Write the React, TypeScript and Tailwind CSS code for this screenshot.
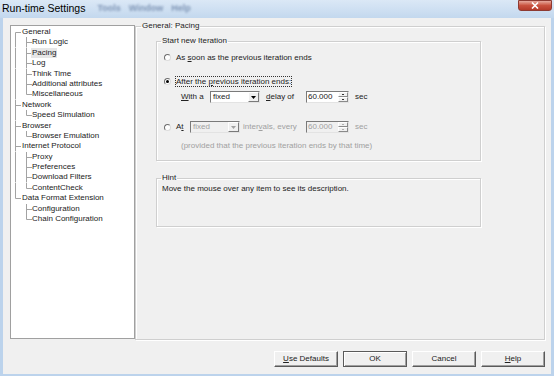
import React from "react";

type TreeRow = {
  label: string;
  level: 0 | 1;
  first?: boolean;
  last?: boolean;
  inLastGroup?: boolean;
  selected?: boolean;
};

const rows: TreeRow[] = [
  { label: "General", level: 0, first: true },
  { label: "Run Logic", level: 1 },
  { label: "Pacing", level: 1, selected: true },
  { label: "Log", level: 1 },
  { label: "Think Time", level: 1 },
  { label: "Additional attributes", level: 1 },
  { label: "Miscellaneous", level: 1, last: true },
  { label: "Network", level: 0 },
  { label: "Speed Simulation", level: 1, last: true },
  { label: "Browser", level: 0 },
  { label: "Browser Emulation", level: 1, last: true },
  { label: "Internet Protocol", level: 0 },
  { label: "Proxy", level: 1 },
  { label: "Preferences", level: 1 },
  { label: "Download Filters", level: 1 },
  { label: "ContentCheck", level: 1, last: true },
  { label: "Data Format Extension", level: 0, last: true },
  { label: "Configuration", level: 1, inLastGroup: true },
  { label: "Chain Configuration", level: 1, inLastGroup: true, last: true },
];

const H = 10.4;
const M = 5.5;
const LINE = "#a3a3a3";

function Connector({ row }: { row: TreeRow }) {
  if (row.level === 0) {
    const y1 = row.first ? M : 0;
    const y2 = row.last ? M : H;
    return (
      <svg width="11" height={H} className="shrink-0">
        <line x1="4.5" y1={y1} x2="4.5" y2={y2} stroke={LINE} />
        <line x1="4.5" y1={M} x2="10" y2={M} stroke={LINE} />
      </svg>
    );
  }
  return (
    <svg width="21" height={H} className="shrink-0">
      {!row.inLastGroup && <line x1="4.5" y1="0" x2="4.5" y2={H} stroke={LINE} />}
      <line x1="15.5" y1="0" x2="15.5" y2={row.last ? M : H} stroke={LINE} />
      <line x1="15.5" y1={M} x2="21" y2={M} stroke={LINE} />
    </svg>
  );
}

function Tree() {
  return (
    <div className="w-[125px] h-[314px] shrink-0 bg-white border border-[#a0a0a0] pt-[1px]">
      {rows.map((r) => (
        <div key={r.label} className="flex items-center h-[10.4px] leading-[10.4px] whitespace-nowrap">
          <Connector row={r} />
          <span className={r.selected ? "bg-[#e6e6e6] px-[1px] -ml-[1px]" : ""}>{r.label}</span>
        </div>
      ))}
    </div>
  );
}

function Radio({ checked }: { checked?: boolean }) {
  return (
    <span className="w-[7px] h-[7px] shrink-0 rounded-full bg-white border border-t-[#6d6d6d] border-l-[#6d6d6d] border-r-[#dcdcdc] border-b-[#dcdcdc] flex items-center justify-center">
      {checked && <span className="w-[3px] h-[3px] rounded-full bg-black" />}
    </span>
  );
}

function Arrow({ disabled }: { disabled?: boolean }) {
  return (
    <svg width="5" height="3" viewBox="0 0 5 3">
      <path d="M0 0 H5 L2.5 3 Z" fill={disabled ? "#a0a0a0" : "#000"} />
    </svg>
  );
}

function Select({ disabled }: { disabled?: boolean }) {
  return (
    <div
      className={`w-[50px] h-[12px] flex border border-t-[#7a7a7a] border-l-[#7a7a7a] border-r-[#e3e3e3] border-b-[#e3e3e3] ${
        disabled ? "bg-[#f0f0f0] text-[#a0a0a0]" : "bg-white"
      }`}
    >
      <span className="flex-1 pl-[2px] leading-[10px]">fixed</span>
      <span className="w-[11px] h-full bg-[#f0f0f0] border border-t-white border-l-white border-r-[#7a7a7a] border-b-[#7a7a7a] flex items-center justify-center">
        <Arrow disabled={disabled} />
      </span>
    </div>
  );
}

function Spin({ disabled }: { disabled?: boolean }) {
  const half =
    "flex-1 bg-[#f0f0f0] border border-t-white border-l-white border-r-[#8a8a8a] border-b-[#8a8a8a] flex items-center justify-center";
  const dot = disabled ? "bg-[#b0b0b0]" : "bg-[#333]";
  return (
    <div
      className={`w-[43px] h-[12px] flex border border-t-[#7a7a7a] border-l-[#7a7a7a] border-r-[#e3e3e3] border-b-[#e3e3e3] ${
        disabled ? "bg-[#f0f0f0] text-[#a0a0a0]" : "bg-white"
      }`}
    >
      <span className="flex-1 pl-[1px] leading-[10px]">60.000</span>
      <span className="w-[10px] h-full flex flex-col">
        <span className={half}>
          <span className={`w-[2px] h-[1px] ${dot}`} />
        </span>
        <span className={half}>
          <span className={`w-[2px] h-[1px] ${dot}`} />
        </span>
      </span>
    </div>
  );
}

function Button({ children, def }: { children: React.ReactNode; def?: boolean }) {
  return (
    <button
      className={`w-[64px] h-[16px] bg-[#f0f0f0] border leading-[14px] text-[8px] ${
        def
          ? "border-[#5a5a5a] shadow-[inset_1px_1px_0_#fff,inset_-1px_-1px_0_#a0a0a0]"
          : "border-t-white border-l-white border-r-[#5a5a5a] border-b-[#5a5a5a] shadow-[inset_-1px_-1px_0_#a0a0a0]"
      }`}
    >
      {children}
    </button>
  );
}

const groupBorder = "border border-[#cfcfcf] shadow-[inset_1px_1px_0_#fff,1px_1px_0_#fff]";

export default function App() {
  return (
    <div className="w-[554px] h-[376px] flex flex-col bg-[#bcd3ec] overflow-hidden font-['Liberation_Sans',Arial,sans-serif] text-[8px] text-[#222]">
      {/* title bar */}
      <div className="h-[18px] shrink-0 flex items-start bg-gradient-to-b from-[#dbe8f6] to-[#c3d8ee]">
        <span className="pl-[2px] pt-[2px] text-[10.5px] leading-[12px] text-black">Run-time Settings</span>
        <span className="ml-[12px] pt-[3px] flex gap-[8px] text-[9px] leading-[11px] font-bold text-[#7f95b5] blur-[1.2px]">
          <span>Tools</span>
          <span>Window</span>
          <span>Help</span>
        </span>
        <span className="ml-auto mr-[2px] w-[34px] h-[11px] rounded-b-[3px] border border-[#8d3a32] bg-gradient-to-b from-[#e6a89d] via-[#c9523f] to-[#b53a2a] flex items-center justify-center">
          <svg width="8" height="7" viewBox="0 0 8 7">
            <path d="M1 0.5 L7 6.5 M7 0.5 L1 6.5" stroke="#fff" strokeWidth="1.6" />
          </svg>
        </span>
      </div>

      {/* client */}
      <div className="flex-1 mx-[3px] mb-[2px] bg-[#f0f0f0] flex flex-col">
        <div className="flex items-start pt-[7px] pl-[7px] pr-[6px]">
          <Tree />

          <fieldset className={`flex-1 h-[319px] -mt-[4px] ${groupBorder}`}>
            <legend className="ml-[5px] px-[1px] leading-[10px]">General: Pacing</legend>

            <fieldset className={`ml-[20px] mt-[5px] w-[325px] h-[125px] ${groupBorder}`}>
              <legend className="ml-[4px] px-[1px] leading-[10px]">Start new Iteration</legend>

              <div className="mt-[6px] pl-[7px] flex items-center gap-[4px] h-[11px]">
                <Radio />
                <span className="border border-transparent leading-[9px]">
                  As <span className="underline">s</span>oon as the previous iteration ends
                </span>
              </div>

              <div className="mt-[13px] pl-[7px] flex items-center gap-[4px] h-[11px]">
                <Radio checked />
                <span className="border border-dotted border-[#333] leading-[9px]">
                  After the <span className="underline">p</span>revious iteration ends:
                </span>
              </div>

              <div className="mt-[4px] pl-[24px] flex items-center h-[12px]">
                <span className="w-[29px]">
                  <span className="underline">W</span>ith a
                </span>
                <Select />
                <span className="ml-[6px] w-[40px]">
                  <span className="underline">d</span>elay of
                </span>
                <Spin />
                <span className="ml-[6px]">sec</span>
              </div>

              <div className="mt-[18px] pl-[7px] flex items-center h-[12px]">
                <Radio />
                <span className="ml-[5px] w-[14px]">
                  A<span className="underline">t</span>
                </span>
                <Select disabled />
                <span className="ml-[3px] w-[63px] text-[#a0a0a0]">
                  inter<span className="underline">v</span>als, every
                </span>
                <Spin disabled />
                <span className="ml-[6px] text-[#a0a0a0]">sec</span>
              </div>

              <div className="mt-[8px] pl-[24px] h-[10px] leading-[10px] text-[#a0a0a0]">
                (provided that the previous iteration ends by that time)
              </div>
            </fieldset>

            <fieldset className={`ml-[20px] mt-[12px] w-[325px] h-[54px] ${groupBorder}`}>
              <legend className="ml-[4px] px-[1px] leading-[10px]">Hint</legend>
              <div className="mt-[1px] pl-[5px] leading-[10px]">
                Move the mouse over any item to see its description.
              </div>
            </fieldset>
          </fieldset>
        </div>

        <div className="flex justify-end gap-[5px] pr-[6px] mt-[11px]">
          <Button>
            <span className="underline">U</span>se Defaults
          </Button>
          <Button def>OK</Button>
          <Button>Cancel</Button>
          <Button>
            <span className="underline">H</span>elp
          </Button>
        </div>
      </div>
    </div>
  );
}
